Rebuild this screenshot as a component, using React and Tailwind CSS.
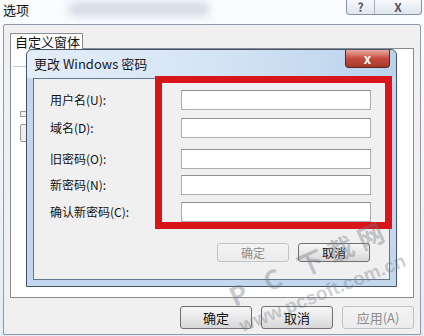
import React from 'react';

const font = "font-['Noto_Sans_CJK_SC','Liberation_Sans',sans-serif]";

const rows = [
    { label: '用户名(U):', gap: 'mt-[11px]' },
    { label: '域名(D):', gap: 'mt-[8px]' },
    { label: '旧密码(O):', gap: 'mt-[11px]' },
    { label: '新密码(N):', gap: 'mt-[6px]' },
    { label: '确认新密码(C):', gap: 'mt-[7px]' },
];

function WinButton({ children, disabled, className = '' }) {
    return (
        <div
            className={`w-[72px] flex items-center justify-center rounded-[3px] border bg-gradient-to-b text-[12px] leading-none ${
                disabled
                    ? 'border-[#bfc3c8] from-[#f4f4f4] to-[#ebebeb] text-[#8d8d8d]'
                    : 'border-[#707070] from-[#f6f6f6] via-[#e9e9e9] to-[#d6d6d6] text-[#111]'
            } ${className}`}
        >
            {children}
        </div>
    );
}

export default function App() {
    return (
        <div className={`relative w-[424px] h-[336px] overflow-hidden bg-gradient-to-b from-[#fbfcfe] to-[#e4ecf5] ${font}`}>
            {/* outer title bar */}
            <div className="h-[24px] flex items-start">
                <span className="ml-[3px] mt-[2px] text-[13px] leading-[15px] text-[#111]">选项</span>
                <div className="ml-[40px] mt-[2px] w-[140px] h-[14px] rounded bg-[#c3ccd8] blur-[5px] opacity-70" />
                <div className="ml-auto mr-[2px] flex h-[15px] rounded-b-[4px] border border-t-0 border-[#8391a2] bg-gradient-to-b from-[#f7f9fb] to-[#dfe6ee] text-[#4d5662] text-[12px] font-bold leading-none">
                    <div className="w-[28px] flex items-center justify-center border-r border-[#a6b0bc]">?</div>
                    <div className="w-[46px] flex items-center justify-center">X</div>
                </div>
            </div>

            {/* outer dialog body */}
            <div className="ml-[3px] w-[418px] h-[311px] rounded-t-[2px] border border-[#8f9aa6] bg-[#f0f0f0] flex flex-col pl-[6px] pr-[6px] pt-[8px]">
                <div className="relative z-10 w-[73px] h-[16px] -mb-px border border-b-0 border-[#898c95] bg-white text-[13px] leading-[15px] pl-[4px] text-[#111]">
                    自定义窗体
                </div>
                <div className="relative h-[250px] border border-[#898c95] bg-white">
                    {/* controls peeking from behind the dialog */}
                    <div className="absolute left-[2px] top-[17px] w-[14px] h-px bg-[#c8c8c8]" />
                    <div className="absolute left-[9px] top-[62px] w-[10px] h-[6px] border border-[#9a9a9a] bg-[#eee]" />
                    <div className="absolute left-[9px] top-[75px] w-[10px] h-[18px] rounded-[2px] border border-[#9a9a9a] bg-[#eee]" />

                    {/* inner dialog */}
                    <div className="relative ml-[15px] w-[371px] h-[238px] rounded-t-[6px] border border-[#43546a] bg-[#c3d8ee] flex flex-col">
                        <div className="h-[28px] flex items-start rounded-t-[6px] bg-gradient-to-r from-[#e3edf8] via-[#d5e4f4] to-[#bad2ec]">
                            <span className="ml-[7px] mt-[6px] text-[13px] leading-[15px] text-[#1a1a1a]">更改 Windows 密码</span>
                            <div className="ml-auto mr-[6px] w-[45px] h-[18px] rounded-b-[4px] border border-t-0 border-[#5a2520] bg-gradient-to-b from-[#e6aaa0] via-[#c74a3e] to-[#a8392d] flex items-center justify-center text-white text-[13px] font-bold leading-none">
                                x
                            </div>
                        </div>
                        <div className="ml-[6px] w-[357px] h-[202px] border border-[#62778e] bg-[#f0f0f0] flex flex-col">
                            {rows.map((r) => (
                                <div key={r.label} className={`flex items-center ${r.gap}`}>
                                    <span className="pl-[16px] w-[147px] text-[12px] leading-none text-[#111]">{r.label}</span>
                                    <div className="w-[190px] h-[20px] border border-[#abadb3] border-t-[#8e9096] bg-white" />
                                </div>
                            ))}
                            <div className="mt-[21px] pr-[19px] flex justify-end gap-[9px]">
                                <WinButton disabled className="h-[19px]">确定</WinButton>
                                <WinButton className="h-[19px]">取消</WinButton>
                            </div>
                        </div>
                    </div>
                </div>
                <div className="mt-[8px] flex justify-end gap-[9px]">
                    <WinButton className="h-[23px] text-[13px]">确定</WinButton>
                    <WinButton className="h-[23px] text-[13px]">取消</WinButton>
                    <WinButton disabled className="h-[23px] text-[13px]">应用(A)</WinButton>
                </div>
            </div>

            {/* red annotation */}
            <div className="absolute left-[155px] top-[76px] w-[237px] h-[153px] border-[7px] border-[#d9151c] pointer-events-none" />

            {/* watermark */}
            <div className="absolute left-[236px] top-[282px] origin-bottom-left -rotate-[24deg] text-[26px] leading-[28px] font-bold tracking-[7px] text-[#6f7780]/40 whitespace-nowrap pointer-events-none">
                P C 下载网
            </div>
            <div className="absolute left-[244px] top-[316px] origin-bottom-left -rotate-[22deg] text-[19px] leading-[20px] font-bold text-[#6f7780]/35 whitespace-nowrap pointer-events-none font-['Liberation_Sans',sans-serif]">
                www.pcsoft.com.cn
            </div>
        </div>
    );
}
